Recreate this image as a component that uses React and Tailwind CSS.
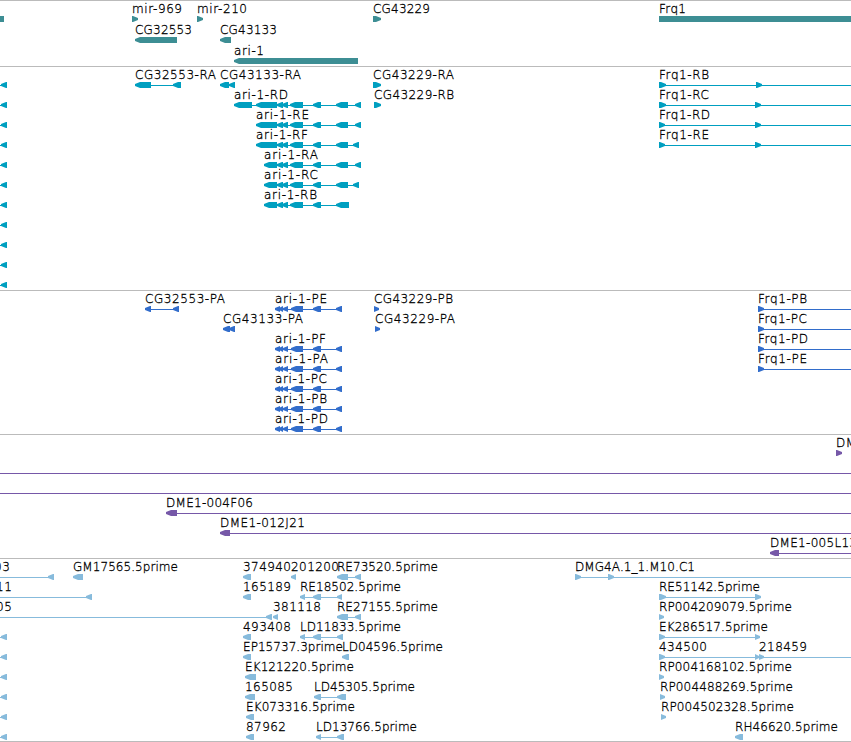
const WIDTH = 851;

// Label: [text, row, start, end]
// Feature: [row, direction, exons as [start, end] pairs, optional line [start, end]]

const ari = (row, head, tail) => [
  row, "l",
  [...head, [277, 283], [282, 288], [290, 303], [313, 321], [336, 348], ...tail],
];

const leftStubs = (from, to) =>
  Array.from({ length: to - from + 1 }, (_, i) => [from + i, "l", [[1, 7]], [0, 7]]);

const cdsRows = [0, 2, 3, 4, 5, 6];

const tracks = [
  {
    name: "gene",
    className: "h-[66px] text-[#3d8e94]",
    pitch: 21,
    labels: [
      ["mir-969", 0, 132, 182],
      ["mir-210", 0, 197, 247],
      ["CG43229", 0, 373, 430],
      ["Frq1", 0, 659, 686],
      ["CG32553", 1, 135, 192],
      ["CG43133", 1, 220, 277],
      ["ari-1", 2, 234, 264],
    ],
    features: [
      [0, "b", [[0, 4]]],
      [0, "r", [[132, 138]]],
      [0, "r", [[197, 203]]],
      [0, "r", [[373, 381]]],
      [0, "b", [[659, 851]]],
      [1, "l", [[135, 177]]],
      [1, "l", [[220, 231]]],
      [2, "l", [[234, 358]]],
    ],
  },
  {
    name: "transcript",
    className: "h-[224px] text-[#009fc0]",
    pitch: 20,
    labels: [
      ["CG32553-RA", 0, 135, 216],
      ["CG43133-RA", 0, 220, 301],
      ["CG43229-RA", 0, 373, 454],
      ["CG43229-RB", 1, 374, 454],
      ["ari-1-RD", 1, 234, 288],
      ["ari-1-RE", 2, 256, 309],
      ["ari-1-RF", 3, 256, 308],
      ["ari-1-RA", 4, 264, 318],
      ["ari-1-RC", 5, 264, 318],
      ["ari-1-RB", 6, 264, 317],
      ["Frq1-RB", 0, 659, 709],
      ["Frq1-RC", 1, 659, 709],
      ["Frq1-RD", 2, 659, 710],
      ["Frq1-RE", 3, 659, 709],
    ],
    features: [
      ...leftStubs(0, 10),
      [0, "l", [[135, 151], [173, 181]]],
      [0, "l", [[220, 229], [229, 235]]],
      [0, "r", [[373, 381]]],
      [1, "r", [[374, 381]]],
      ari(1, [[234, 252], [256, 277]], [[355, 361]]),
      ari(2, [[256, 277]], [[355, 361]]),
      ari(3, [[256, 277]], [[353, 359]]),
      ari(4, [[264, 277]], [[355, 361]]),
      ari(5, [[264, 277]], [[353, 359]]),
      ari(6, [[264, 277]], [[340, 349]]),
      [0, "r", [[659, 666], [756, 762]], [659, 851]],
      [1, "r", [[659, 666], [755, 761]], [659, 851]],
      [2, "r", [[659, 665], [755, 761]], [659, 851]],
      [3, "r", [[659, 665], [755, 761]], [659, 851]],
    ],
  },
  {
    name: "cds",
    className: "h-[144px] text-[#326dcb]",
    pitch: 20,
    labels: [
      ["CG32553-PA", 0, 145, 225],
      ["CG43133-PA", 1, 223, 303],
      ["ari-1-PE", 0, 275, 327],
      ["ari-1-PF", 2, 275, 326],
      ["ari-1-PA", 3, 275, 328],
      ["ari-1-PC", 4, 275, 327],
      ["ari-1-PB", 5, 275, 327],
      ["ari-1-PD", 6, 275, 328],
      ["CG43229-PB", 0, 374, 453],
      ["CG43229-PA", 1, 375, 455],
      ["Frq1-PB", 0, 758, 807],
      ["Frq1-PC", 1, 758, 807],
      ["Frq1-PD", 2, 758, 808],
      ["Frq1-PE", 3, 758, 807],
    ],
    features: [
      [0, "l", [[145, 151], [173, 179]]],
      [1, "l", [[223, 230], [229, 235]]],
      ...cdsRows.map((row) => [
        row, "l",
        [[275, 280], [279, 283], [283, 288], [291, 303], [313, 321], [336, 342]],
      ]),
      [0, "r", [[374, 379]]],
      [1, "r", [[375, 380]]],
      ...[0, 1, 2, 3].map((row) => [row, "r", [[758, 764]], [758, 851]]),
    ],
  },
  {
    name: "bac",
    className: "h-[124px] text-[#7658a8]",
    pitch: 20,
    labels: [
      ["DM", 0, 836, 856],
      ["DME1-004F06", 3, 166, 253],
      ["DME1-012J21", 4, 220, 305],
      ["DME1-005L13", 5, 770, 857],
    ],
    features: [
      [0, "r", [[836, 842]]],
      [1, "b", [], [0, 851]],
      [2, "b", [], [0, 851]],
      [3, "l", [[166, 177]], [166, 851]],
      [4, "l", [[220, 230]], [220, 851]],
      [5, "l", [[770, 779]], [770, 851]],
    ],
  },
  {
    name: "est",
    className: "h-[183px] text-[#87bbdc]",
    pitch: 20,
    labels: [
      ["03", 0, -6, 10],
      ["11", 1, -4, 12],
      ["05", 2, -4, 12],
      ["GM17565.5prime", 0, 73, 178],
      ["374940", 0, 243, 291],
      ["201200", 0, 291, 339],
      ["RE73520.5prime", 0, 337, 438],
      ["165189", 1, 243, 291],
      ["RE18502.5prime", 1, 300, 401],
      ["381118", 2, 273, 321],
      ["RE27155.5prime", 2, 337, 438],
      ["493408", 3, 243, 291],
      ["LD11833.5prime", 3, 300, 401],
      ["EP15737.3prime", 4, 243, 343],
      ["LD04596.5prime", 4, 342, 443],
      ["EK121220.5prime", 5, 245, 354],
      ["165085", 6, 245, 293],
      ["LD45305.5prime", 6, 314, 415],
      ["EK073316.5prime", 7, 246, 355],
      ["87962", 8, 246, 286],
      ["LD13766.5prime", 8, 316, 417],
      ["DMG4A.1_1.M10.C1", 0, 575, 695],
      ["RE51142.5prime", 1, 659, 760],
      ["RP004209079.5prime", 2, 659, 792],
      ["EK286517.5prime", 3, 659, 768],
      ["434500", 4, 659, 707],
      ["218459", 4, 759, 807],
      ["RP004168102.5prime", 5, 659, 792],
      ["RP004488269.5prime", 6, 660, 793],
      ["RP004502328.5prime", 7, 661, 794],
      ["RH46620.5prime", 8, 735, 838],
    ],
    features: [
      [0, "l", [[48, 54]], [0, 54]],
      [1, "l", [[86, 92]], [0, 92]],
      [2, "l", [[266, 272]], [0, 272]],
      ...leftStubs(3, 8),
      [0, "l", [[73, 83]]],
      [0, "l", [[243, 251]]],
      [0, "l", [[291, 296]]],
      [0, "l", [[337, 348], [355, 361]]],
      [1, "l", [[243, 251]]],
      [1, "l", [[300, 305], [313, 321], [337, 342]]],
      [2, "l", [[273, 278]]],
      [2, "l", [[337, 348], [355, 361]]],
      [3, "l", [[243, 251]]],
      [3, "l", [[300, 305], [313, 321], [337, 343]]],
      [4, "l", [[243, 251]]],
      [4, "l", [[342, 349]]],
      [5, "l", [[245, 256]]],
      [6, "l", [[245, 255]]],
      [6, "l", [[314, 321], [337, 346]]],
      [7, "l", [[246, 254]]],
      [8, "l", [[246, 254]]],
      [8, "l", [[316, 321], [337, 344]]],
      [0, "r", [[575, 581], [608, 614]], [575, 851]],
      [1, "r", [[659, 666], [755, 761]]],
      [2, "r", [[659, 664]]],
      [3, "r", [[659, 665], [755, 760]]],
      [4, "r", [[659, 665], [755, 759], [759, 764]], [659, 851]],
      [5, "r", [[659, 664]]],
      [6, "r", [[660, 665]]],
      [7, "r", [[661, 666]]],
      [8, "l", [[735, 743]]],
    ],
  },
];

function exonPoints(dir, start, end, top) {
  const bottom = top + 6;
  const taper = Math.min(5, end - start);
  if (dir === "b") return `${start},${top} ${end},${top} ${end},${bottom} ${start},${bottom}`;
  if (dir === "l") {
    const s = start + taper;
    return `${start},${top + 2} ${s},${top} ${end},${top} ${end},${bottom} ${s},${bottom} ${start},${top + 4}`;
  }
  const s = end - taper;
  return `${end},${top + 2} ${s},${top} ${start},${top} ${start},${bottom} ${s},${bottom} ${end},${top + 4}`;
}

function Feature({ feature, pitch }) {
  const [row, dir, exons, line] = feature;
  const top = 16 + row * pitch;
  const span = line || (exons.length > 1 ? [exons[0][0], exons[exons.length - 1][1]] : null);
  return (
    <g fill="currentColor">
      {span && <rect x={span[0]} y={top + 3} width={span[1] - span[0]} height="1" />}
      {exons.map(([start, end]) => (
        <polygon key={start} points={exonPoints(dir, start, end, top)} />
      ))}
    </g>
  );
}

function Track({ track }) {
  return (
    <section className={`w-full overflow-hidden border-t border-[#bbbbbb] ${track.className}`}>
      <svg className="-mt-px block h-full w-full overflow-visible" aria-label={track.name}>
        {track.features.map((feature, i) => (
          <Feature key={i} feature={feature} pitch={track.pitch} />
        ))}
        {track.labels.map(([text, row, start, end]) => (
          <text
            key={`${text}-${row}`}
            x={start}
            y={13 + row * track.pitch}
            textLength={end - start}
            className="fill-black stroke-black stroke-[0.3px]"
          >
            {text}
          </text>
        ))}
      </svg>
    </section>
  );
}

export default function App() {
  return (
    <main
      className="flex h-[742px] flex-col overflow-hidden border-b border-[#bbbbbb] bg-white font-['DejaVu_Sans',sans-serif] text-[12px] font-extralight"
      style={{ width: WIDTH }}
    >
      {tracks.map((track) => (
        <Track key={track.name} track={track} />
      ))}
    </main>
  );
}
